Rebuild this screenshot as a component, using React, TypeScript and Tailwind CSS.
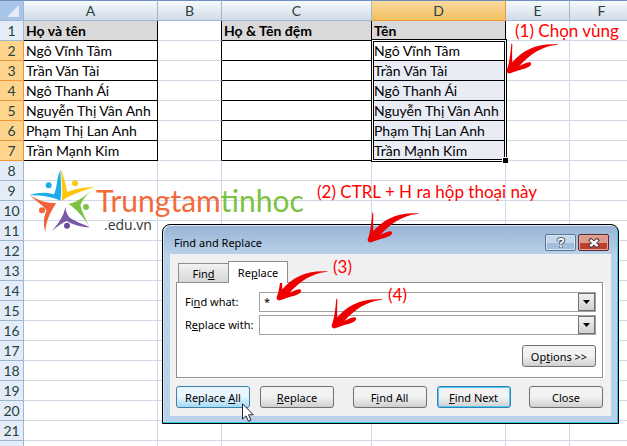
import type { ReactNode } from 'react'
import { cva } from 'class-variance-authority'
import { clsx } from 'clsx'

interface Column {
  id: string
  width: string
  title?: string
  filled?: boolean
  boxed?: boolean
}

const names = [
  'Ngô Vĩnh Tâm',
  'Trần Văn Tài',
  'Ngô Thanh Ái',
  'Nguyễn Thị Vân Anh',
  'Phạm Thị Lan Anh',
  'Trần Mạnh Kim',
]

const columns: Column[] = [
  { id: 'A', width: 'w-[134px]', title: 'Họ và tên', filled: true, boxed: true },
  { id: 'B', width: 'w-16' },
  { id: 'C', width: 'w-[150px]', title: 'Họ & Tên đệm', boxed: true },
  { id: 'D', width: 'w-[134px]', title: 'Tên', filled: true, boxed: true },
  { id: 'E', width: 'w-16' },
  { id: 'F', width: 'w-auto' },
]

const rows = Array.from({ length: 21 }, (_, i) => i + 1)

function Cell({ column, row }: { column: Column; row: number }) {
  const inRange = row <= 7
  const boxed = inRange && column.boxed
  const isTitle = row === 1 && column.boxed
  const selected = column.id === 'D' && row >= 3 && inRange

  return (
    <td
      className={clsx(
        'h-5 border-r border-b p-0 pl-0.5 whitespace-nowrap',
        boxed ? 'border-b-black' : 'border-b-[#d0d7e5]',
        boxed || (inRange && column.id === 'B') ? 'border-r-black' : 'border-r-[#d0d7e5]',
        isTitle && 'bg-[#d9d9d9] font-bold',
        selected && 'bg-[#e9ebf5]',
      )}
    >
      {isTitle && column.title}
      {inRange && row > 1 && column.filled && names[row - 2]}
    </td>
  )
}

function Sheet() {
  return (
    <table className="w-full min-w-[634px] table-fixed border-separate border-spacing-0 font-['Lato','Noto_Sans',sans-serif] text-sm leading-[19px] text-black">
      <thead>
        <tr>
          <th className="h-[21px] w-6 border-t border-r border-b border-t-[#6b90bd] border-r-[#9eb6ce] border-b-[#9eb6ce] bg-[#a9c4e9] p-0">
            <svg viewBox="0 0 12 12" className="mr-1 ml-auto h-3 w-3" aria-hidden="true">
              <path d="M12 0v12H0z" fill="#e4ecf7" />
            </svg>
          </th>
          {columns.map((column) => (
            <th
              key={column.id}
              scope="col"
              className={clsx(
                'border-t border-r border-b border-t-[#6b90bd] bg-linear-to-b p-0 text-center font-normal text-[#27413e]',
                column.width,
                column.id === 'D'
                  ? 'border-r-[#f29536] border-b-[#f29536] from-[#f9d99f] to-[#f1c15f]'
                  : 'border-r-[#9eb6ce] border-b-[#9eb6ce] from-[#f6fafb] to-[#d3dbe9]',
              )}
            >
              {column.id}
            </th>
          ))}
        </tr>
      </thead>
      <tbody>
        {rows.map((row) => (
          <tr key={row}>
            <th
              scope="row"
              className={clsx(
                'h-5 border-r border-b p-0 text-center font-normal text-[#27413e]',
                row >= 2 && row <= 7
                  ? 'border-[#f29536] bg-[#ffd58d]'
                  : 'border-[#9eb6ce] bg-[#e4ecf7]',
              )}
            >
              {row}
            </th>
            {columns.map((column) => (
              <Cell key={column.id} column={column} row={row} />
            ))}
          </tr>
        ))}
        <tr>
          <td className="h-5 border-r border-[#9eb6ce] bg-[#e4ecf7] p-0" />
          {columns.map((column) => (
            <Cell key={column.id} column={column} row={22} />
          ))}
        </tr>
      </tbody>
    </table>
  )
}

function SelectionFrame() {
  return (
    <div className="pointer-events-none absolute top-[39px] left-[371px] h-[123px] w-[136px] border border-black shadow-[inset_0_0_0_1px_#ffffff,inset_0_0_0_2px_#000000]">
      <span className="absolute -right-0.5 -bottom-0.5 h-1.5 w-1.5 border-t border-l border-white bg-black" />
    </div>
  )
}

function Logo() {
  return (
    <div className="absolute top-[166px] left-[26px] flex">
      <svg viewBox="0 0 228 210" className="h-[70px] w-[76px]" aria-hidden="true">
        <path
          d="M103 12C104 40 108 75 103 104C85 94 50 88 10 87C40 78 65 78 84 85C94 65 91 38 103 12Z"
          fill="#1badea"
        />
        <path
          d="M105 10C114 35 121 60 123 78C150 67 180 62 206 64C170 74 130 88 108 105C110 70 107 40 105 10Z"
          fill="#fdc70c"
        />
        <path
          d="M206 65C184 84 167 103 163 118C169 140 179 160 190 180C170 150 148 128 128 114C155 108 185 85 206 65Z"
          fill="#7cc242"
        />
        <path
          d="M118 122C120 138 125 148 131 155C150 168 172 174 192 184C165 184 140 176 122 165C108 170 92 184 76 196C98 172 114 148 118 122Z"
          fill="#7a5aa6"
        />
        <path
          d="M12 88C35 103 62 112 91 112C75 133 60 165 58 198C50 170 54 148 62 134C50 116 30 106 12 88Z"
          fill="#f2633a"
        />
        <circle cx="68" cy="58" r="9" fill="#1badea" />
        <circle cx="147" cy="52" r="9" fill="#fdc70c" />
        <circle cx="180" cy="123" r="9" fill="#7cc242" />
        <circle cx="123" cy="179" r="9" fill="#7049a0" />
        <circle cx="48" cy="133" r="9" fill="#f2633a" />
      </svg>
      <div className="-ml-1.5 pt-[18px]">
        <p className="font-['Lato',sans-serif] text-[30px] leading-8 text-[#f26b3a]">
          Trungtam<span className="text-[#7cc242]">tinhoc</span>
        </p>
        <p className="ml-2 font-['Open_Sans',sans-serif] text-sm leading-[18px] text-[#333333]">.edu.vn</p>
      </div>
    </div>
  )
}

function Note({ className, children }: { className: string; children: ReactNode }) {
  return (
    <p
      className={clsx(
        "absolute font-['Lato','Noto_Sans',sans-serif] text-[17px] leading-5 whitespace-nowrap text-[#ff0000]",
        className,
      )}
    >
      {children}
    </p>
  )
}

function Arrow({ className }: { className: string }) {
  return (
    <svg viewBox="0 0 156 99" className={clsx('pointer-events-none absolute h-[33px] w-[52px]', className)} aria-hidden="true">
      <path
        d="M16 2C18 1 19 4 19 8C18 26 18 43 19 58C48 22 93 0 154 4C156 5 155 6 150 6C108 10 72 34 40 69C50 64 59 60 69 58C78 57 77 67 69 71C52 80 30 82 15 90C7 93 1 90 2 82C11 59 13 31 16 2Z"
        fill="#ee0000"
      />
    </svg>
  )
}

const dialogButton = cva(
  'h-[22px] w-[74px] rounded-[3px] border text-center text-[11px] leading-none whitespace-nowrap text-black',
  {
    variants: {
      look: {
        normal: 'border-[#707070] bg-linear-to-b from-[#f2f2f2] from-50% to-[#cfcfcf]',
        hover: 'border-[#3c7fb1] bg-linear-to-b from-[#eaf6fd] from-45% to-[#a7d9f5]',
        primary:
          'border-[#3c7fb1] bg-linear-to-b from-[#f2f2f2] from-50% to-[#cfcfcf] shadow-[inset_0_0_0_1px_#46cdf5]',
      },
    },
    defaultVariants: { look: 'normal' },
  },
)

function DialogButton({ look, children }: { look?: 'normal' | 'hover' | 'primary'; children: ReactNode }) {
  return (
    <button type="button" className={dialogButton({ look })}>
      {children}
    </button>
  )
}

function ComboField({ id, label, value }: { id: string; label: ReactNode; value: string }) {
  return (
    <div className="flex h-5 items-center">
      <label htmlFor={id} className="w-[74px] shrink-0 whitespace-nowrap">
        {label}
      </label>
      <div className="flex h-5 min-w-0 flex-1 border border-[#a0a0a0] bg-white">
        <input id={id} type="text" defaultValue={value} className="min-w-0 flex-1 px-1 text-[11px] outline-none" />
        <button
          type="button"
          aria-label="Show history"
          className="flex w-[17px] items-center justify-center border border-[#707070] bg-linear-to-b from-[#f2f2f2] to-[#d0d0d0]"
        >
          <svg viewBox="0 0 7 4" className="h-1 w-[7px]" aria-hidden="true">
            <path d="M0 0h7L3.500 4z" fill="#000000" />
          </svg>
        </button>
      </div>
    </div>
  )
}

function FindReplaceDialog() {
  return (
    <section
      role="dialog"
      aria-labelledby="dialog-title"
      className="absolute top-[224px] left-[162px] w-[457px] rounded-t-lg border border-black bg-linear-to-b from-[#98b4d3] to-[#b9d1ea] to-15% px-[7px] pb-[7px] font-['Noto_Sans',sans-serif] text-[11px] text-black shadow-[inset_-1px_-1px_0_#35c8e0,inset_1px_1px_0_#d5e6f5]"
    >
      <header className="flex h-[29px] items-start justify-between pl-1">
        <h2 id="dialog-title" className="pt-2.5 leading-4">
          Find and Replace
        </h2>
        <div className="flex gap-0.5 pt-[9px] pr-0.5">
          <button
            type="button"
            aria-label="Help"
            className="flex h-[17px] w-[31px] items-center justify-center rounded-xs border border-[#5a7896] bg-linear-to-b from-[#c5d8eb] from-50% to-[#a3bedb] to-50% shadow-[inset_0_0_0_1px_#d5e4f2]"
          >
            <svg viewBox="0 0 10 12" className="h-3 w-2.5" aria-hidden="true">
              <path d="M2.500 4.200V2.800Q2.500 2 5 2T7.500 3.500Q7.500 4.600 5 6V7.200M5 9.200V10.500" fill="none" stroke="#3f4a5c" strokeWidth="3.600" />
              <path d="M2.500 4V2.800Q2.500 2 5 2T7.500 3.500Q7.500 4.600 5 6V7M5 8.700V10.300" fill="none" stroke="#ffffff" strokeWidth="1.800" />
            </svg>
          </button>
          <button
            type="button"
            aria-label="Close window"
            className="flex h-[17px] w-[31px] items-center justify-center rounded-xs border border-[#5c2a2a] bg-linear-to-b from-[#dc9a8c] from-50% to-[#bf3f2d] to-50% shadow-[inset_0_0_0_1px_#e3a99e]"
          >
            <svg viewBox="0 0 12 10" className="h-2.5 w-3" aria-hidden="true">
              <path d="M1.500 1L10.500 9M10.500 1L1.500 9" stroke="#4b3a44" strokeWidth="4" />
              <path d="M2.300 1.800L9.700 8.200M9.700 1.800L2.300 8.200" stroke="#ffffff" strokeWidth="2.400" />
            </svg>
          </button>
        </div>
      </header>

      <div className="bg-[#f0f0f0] pt-[7px] pr-2 pb-2 pl-1.5">
        <div role="tablist" className="flex items-end pl-0.5">
          <button
            type="button"
            role="tab"
            aria-selected="false"
            className="h-[19px] w-[50px] border border-r-0 border-b-0 border-[#8c8e94] bg-linear-to-b from-[#f2f2f2] to-[#d6d6d6] leading-none"
          >
            Fin<u>d</u>
          </button>
          <button
            type="button"
            role="tab"
            aria-selected="true"
            className="relative z-10 -mb-px h-[22px] w-[60px] border border-b-0 border-[#8c8e94] bg-white leading-none"
          >
            Re<u>p</u>lace
          </button>
        </div>

        <div role="tabpanel" className="h-24 border border-[#8c8e94] bg-white pt-[9px] pr-1.5 pl-2 shadow-[2px_1px_0_#ffffff]">
          <div className="flex flex-col gap-[3px]">
            <ComboField id="find-what" label={<>Fi<u>n</u>d what:</>} value="*" />
            <ComboField id="replace-with" label={<>R<u>e</u>place with:</>} value="" />
          </div>
          <div className="flex justify-end pt-2.5">
            <DialogButton>
              Op<u>t</u>ions &gt;&gt;
            </DialogButton>
          </div>
        </div>

        <div className="flex justify-between pt-2">
          <div className="flex gap-2.5">
            <DialogButton look="hover">
              Replace <u>A</u>ll
            </DialogButton>
            <DialogButton>
              <u>R</u>eplace
            </DialogButton>
          </div>
          <div className="flex gap-2.5">
            <DialogButton>
              F<u>i</u>nd All
            </DialogButton>
            <DialogButton look="primary">
              <u>F</u>ind Next
            </DialogButton>
          </div>
          <DialogButton>Close</DialogButton>
        </div>
      </div>
    </section>
  )
}

function Cursor() {
  return (
    <svg viewBox="0 0 12 19" className="pointer-events-none absolute top-[403px] left-[242px] h-[19px] w-3" aria-hidden="true">
      <path d="M.5.800V16L4 12.800L6.500 18.300L9 17.200L6.600 11.800H11.300Z" fill="#ffffff" stroke="#222233" />
    </svg>
  )
}

export default function App() {
  return (
    <main className="relative h-screen overflow-hidden bg-white">
      <Sheet />
      <SelectionFrame />
      <Logo />
      <FindReplaceDialog />

      {/* Step by step notes */}
      <Note className="top-[21px] left-[515px]">(1) Chọn vùng</Note>
      <Arrow className="top-[43px] left-[506px]" />
      <Note className="top-[182px] left-[317px]">(2) CTRL + H ra hộp thoại này</Note>
      <Arrow className="top-[212px] left-[367px]" />
      <Note className="top-[257px] left-[333px]">(3)</Note>
      <Arrow className="top-[270px] left-[276px]" />
      <Note className="top-[285px] left-[388px]">(4)</Note>
      <Arrow className="top-[298px] left-[331px]" />

      <Cursor />
    </main>
  )
}
